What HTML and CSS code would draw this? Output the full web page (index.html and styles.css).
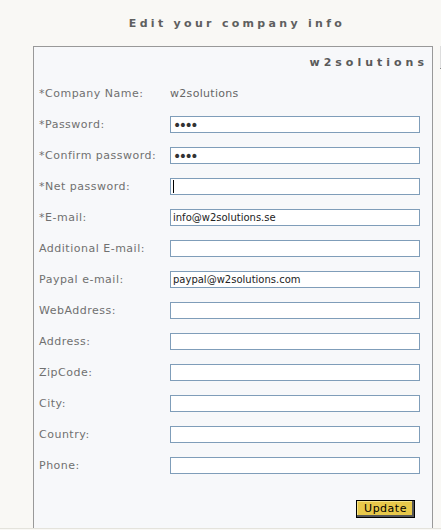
FILE: index.html
```html
<!DOCTYPE html>
<html>
<head>
<meta charset="utf-8">
<link rel="stylesheet" href="styles.css">
</head>
<body>
<div class="page">
  <h1 class="title">Edit your company info</h1>
  <div class="wrap">
    <div class="panel">
      <div class="company">w2solutions</div>
      <div class="form">
        <div class="row"><span class="label">*Company Name:</span><span class="value">w2solutions</span></div>
        <div class="row"><span class="label">*Password:</span><input class="field pw" type="password" value="oooo"></div>
        <div class="row"><span class="label">*Confirm password:</span><input class="field pw" type="password" value="oooo"></div>
        <div class="row"><span class="label">*Net password:</span><div class="field caretbox"><span class="caret"></span></div></div>
        <div class="row"><span class="label">*E-mail:</span><input class="field" type="text" value="info@w2solutions.se"></div>
        <div class="row"><span class="label">Additional E-mail:</span><input class="field" type="text" value=""></div>
        <div class="row"><span class="label">Paypal e-mail:</span><input class="field" type="text" value="paypal@w2solutions.com"></div>
        <div class="row"><span class="label">WebAddress:</span><input class="field" type="text" value=""></div>
        <div class="row"><span class="label">Address:</span><input class="field" type="text" value=""></div>
        <div class="row"><span class="label">ZipCode:</span><input class="field" type="text" value=""></div>
        <div class="row"><span class="label">City:</span><input class="field" type="text" value=""></div>
        <div class="row"><span class="label">Country:</span><input class="field" type="text" value=""></div>
        <div class="row"><span class="label">Phone:</span><input class="field" type="text" value=""></div>
      </div>
      <div class="actions"><button class="btn" type="button">Update</button></div>
    </div>
    <div class="side"></div>
  </div>
  <div class="rule"></div>
</div>
</body>
</html>
```
FILE: styles.css
```css
html, body {
  margin: 0;
  padding: 0;
  background: #f9f8f5;
  font-family: "DejaVu Sans", Verdana, sans-serif;
  font-size: 11px;
  color: #666;
  overflow: hidden;
}
.page {
  width: 441px;
  height: 530px;
  overflow: hidden;
}
.title {
  margin: 0;
  padding: 16px 0 0 33px;
  height: 33px;
  box-sizing: border-box;
  line-height: 16px;
  font-size: 11px;
  font-weight: bold;
  letter-spacing: 3.3px;
  text-align: center;
  color: #5f5f5f;
}
.wrap {
  display: flex;
  align-items: flex-start;
  margin-top: 13px;
  padding-left: 33px;
}
.panel {
  width: 398px;
  height: 481px;
  border: 1px solid #999;
  border-bottom: none;
  background: #f7f8fa;
  box-sizing: content-box;
}
.side {
  width: 1px;
  height: 22px;
  margin-left: 7px;
  background: #ddd;
  border-bottom: 1px solid #888;
}
.company {
  padding: 8px 4px 0 0;
  line-height: 16px;
  text-align: right;
  font-weight: bold;
  letter-spacing: 4px;
  color: #5a5a5a;
  font-size: 11px;
}
.form {
  margin-top: 7px;
  padding-left: 5px;
}
.row {
  display: flex;
  align-items: center;
  height: 31px;
}
.label {
  width: 131px;
  flex: none;
  color: #707070;
  letter-spacing: 0.5px;
}
.value {
  color: #666;
  letter-spacing: 0.3px;
}
.field {
  width: 250px;
  height: 17px;
  box-sizing: border-box;
  margin: 0;
  padding: 0 0 0 2px;
  border: 1px solid #7f9db9;
  background: #fff;
  font-family: "DejaVu Sans", Verdana, sans-serif;
  font-size: 10px;
  color: #222;
  outline: none;
}
.pw {
  font-size: 14px;
  letter-spacing: -2.5px;
  color: #333;
}
.caretbox {
  display: flex;
  align-items: center;
}
.caret {
  display: block;
  width: 1px;
  height: 13px;
  background: #000;
}
.actions {
  display: flex;
  justify-content: flex-end;
  padding-right: 17px;
  margin-top: 19px;
}
.btn {
  width: 59px;
  height: 18px;
  box-sizing: border-box;
  margin: 0;
  padding: 0;
  border: 1px solid #000;
  box-shadow: inset -2px -2px 0 #555, inset 1px 1px 0 #f5e48a;
  background: #e8c84a;
  font-family: "DejaVu Sans", Verdana, sans-serif;
  font-size: 11px;
  line-height: 14px;
  letter-spacing: 0.5px;
  color: #000;
}
.rule {
  height: 1px;
  border-top: 1px solid #e4e3dc;
  border-bottom: 1px solid #999;
}
```
